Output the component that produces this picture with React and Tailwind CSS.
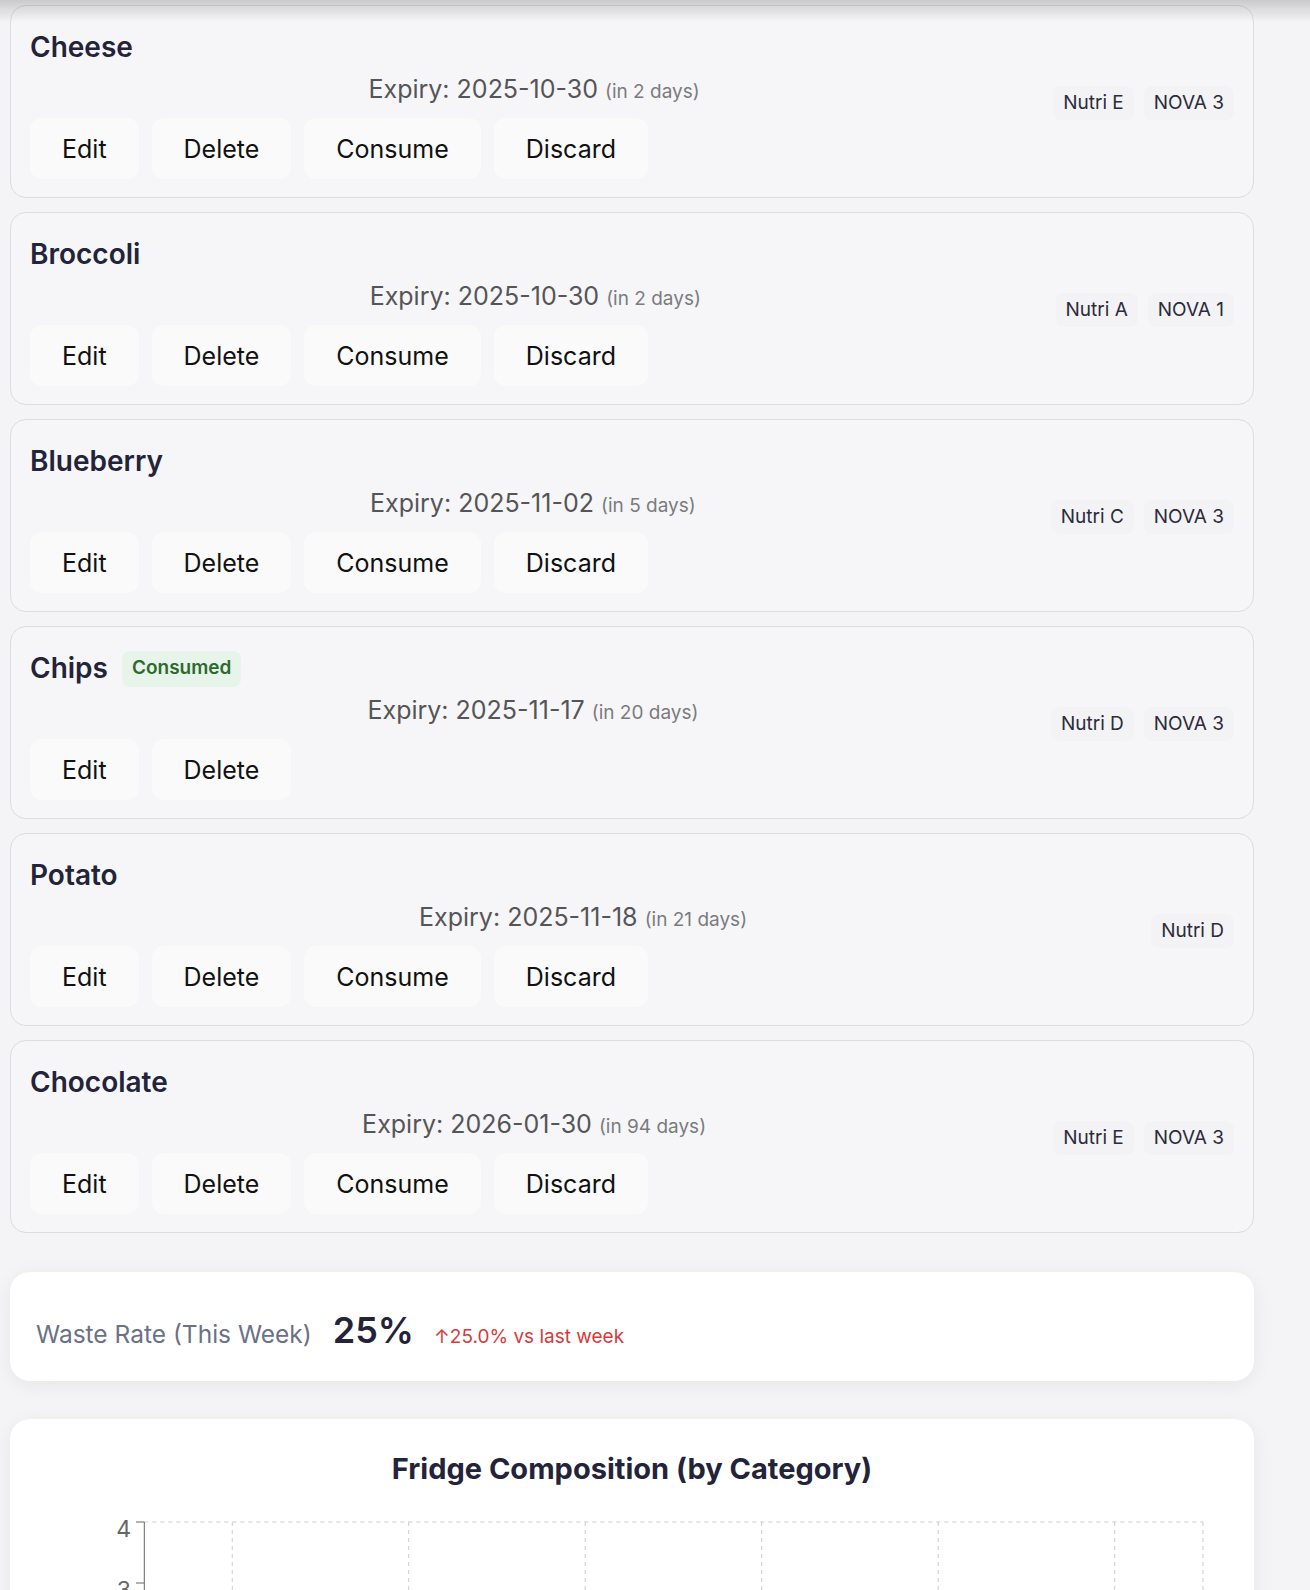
import React from "react";

const items = [
  { name: "Cheese", date: "2025-10-30", days: 2, badges: ["Nutri E", "NOVA 3"] },
  { name: "Broccoli", date: "2025-10-30", days: 2, badges: ["Nutri A", "NOVA 1"] },
  { name: "Blueberry", date: "2025-11-02", days: 5, badges: ["Nutri C", "NOVA 3"] },
  { name: "Chips", date: "2025-11-17", days: 20, badges: ["Nutri D", "NOVA 3"], consumed: true },
  { name: "Potato", date: "2025-11-18", days: 21, badges: ["Nutri D"] },
  { name: "Chocolate", date: "2026-01-30", days: 94, badges: ["Nutri E", "NOVA 3"] },
];

function Btn({ children }) {
  return (
    <button className="h-[61px] px-[32px] rounded-[12px] bg-[#fafafb] text-[25px] leading-[30px] text-[#111]">
      {children}
    </button>
  );
}

function ItemCard({ item }) {
  return (
    <div className="flex items-center gap-[15px] h-[193px] border border-[#dcdce1] rounded-[16px] bg-[#f6f6f8] p-[19px] mb-[14px]">
      <div className="flex-1 flex flex-col">
        <div className="flex items-center h-[39px] mt-[4px]">
          <h3 className="text-[28px] leading-[39px] font-semibold text-[#23233a]">{item.name}</h3>
          {item.consumed && (
            <span className="ml-[14px] h-[36px] px-[10px] flex items-center rounded-[8px] bg-[#e7f4e9] text-[19px] font-semibold text-[#2e6a30]">
              Consumed
            </span>
          )}
        </div>
        <div className="mt-[8px] text-center text-[25px] leading-[29px] text-[#555558]">
          Expiry: {item.date}{" "}
          <span className="text-[19px] text-[#7b7b7e]">(in {item.days} days)</span>
        </div>
        <div className="mt-[12px] flex gap-[13px]">
          <Btn>Edit</Btn>
          <Btn>Delete</Btn>
          {!item.consumed && <Btn>Consume</Btn>}
          {!item.consumed && <Btn>Discard</Btn>}
        </div>
      </div>
      <div className="flex gap-[10px] mt-[3px]">
        {item.badges.map((b) => (
          <span key={b} className="h-[34px] px-[10px] flex items-center rounded-[8px] bg-[#f3f3f5] text-[19px] text-[#2b2b3b]">
            {b}
          </span>
        ))}
      </div>
    </div>
  );
}

function Chart() {
  const xs = [222.3, 398.7, 575.2, 751.7, 928.2, 1104.7, 1193];
  return (
    <svg width="1244" height="200" className="block mt-[13px]">
      <line x1="134.3" y1="23" x2="1193" y2="23" stroke="#cccccc" strokeDasharray="4 4" />
      {xs.map((x) => (
        <line key={x} x1={x} y1="23" x2={x} y2="200" stroke="#cccccc" strokeDasharray="4 4" />
      ))}
      <line x1="134.3" y1="23" x2="134.3" y2="200" stroke="#666" />
      <line x1="126" y1="23" x2="134.3" y2="23" stroke="#666" />
      <line x1="126" y1="84" x2="134.3" y2="84" stroke="#666" />
      <text x="121" y="38" textAnchor="end" fontSize="23" fill="#666" fontFamily="Inter, sans-serif">4</text>
      <text x="121" y="99" textAnchor="end" fontSize="23" fill="#666" fontFamily="Inter, sans-serif">3</text>
    </svg>
  );
}

export default function App() {
  return (
    <div className="min-h-screen bg-[#f4f4f6] font-['Inter',sans-serif] pt-[5px] pl-[10px] pb-10">
      <div className="fixed top-0 left-0 right-0 h-[22px] bg-linear-to-b from-[rgba(0,0,0,0.17)] to-transparent pointer-events-none z-10" />
      <div className="w-[1244px]">
        {items.map((it) => (
          <ItemCard key={it.name} item={it} />
        ))}
        <div className="mt-[39px] h-[109px] rounded-[20px] bg-white shadow-[0_4px_20px_rgba(0,0,0,0.06)] px-[26px] flex items-center">
          <div className="flex items-baseline pt-[6px]">
            <span className="text-[24.5px] text-[#6b7186]">Waste Rate (This Week)</span>
            <span className="ml-[21px] text-[36px] font-semibold text-[#23233a]">25%</span>
            <span className="ml-[20px] text-[19px] text-[#d63b3b]">↑25.0% vs last week</span>
          </div>
        </div>
        <div className="mt-[38px] h-[320px] rounded-[20px] bg-white shadow-[0_4px_20px_rgba(0,0,0,0.06)] pt-[33px]">
          <h2 className="text-center text-[29px] leading-[34px] font-bold text-[#23233a]">
            Fridge Composition (by Category)
          </h2>
          <Chart />
        </div>
      </div>
    </div>
  );
}
